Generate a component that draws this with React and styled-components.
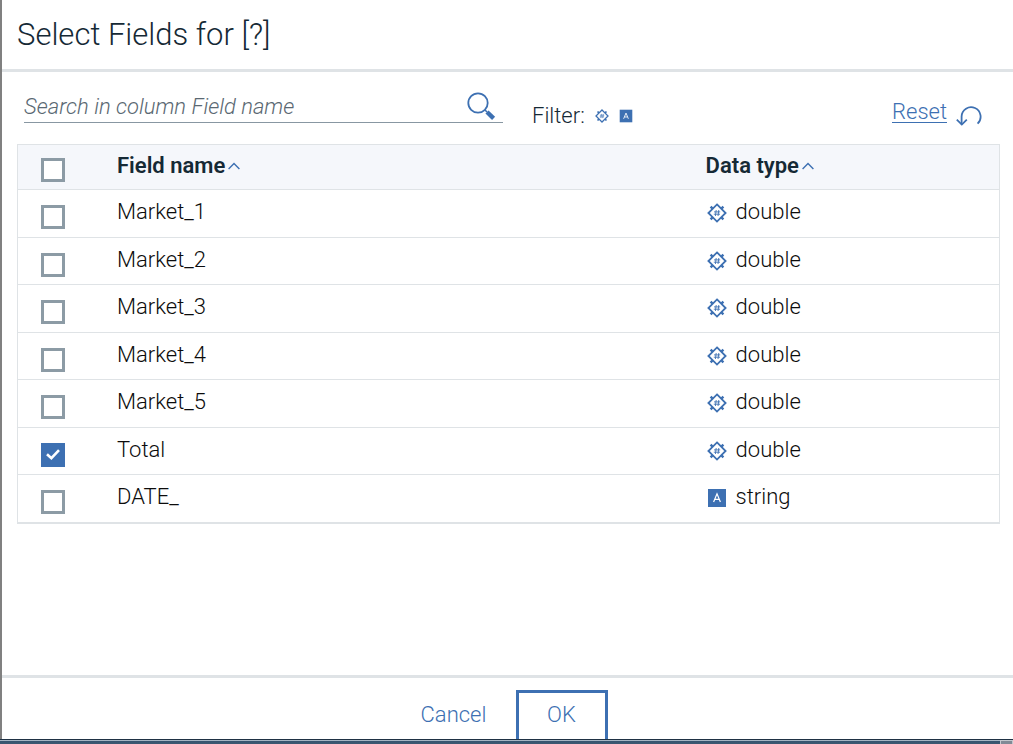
import React, { useState } from "react";
import styled, { createGlobalStyle } from "styled-components";

const blue = "#3d70b2";
const line = "#dfe3e6";

const GlobalStyle = createGlobalStyle`
  *, *::before, *::after { box-sizing: border-box; }
  body {
    margin: 0;
    background: #fff;
    color: #0c0c0c;
    font-family: Roboto, "Liberation Sans", sans-serif;
    font-weight: 300;
  }
  button, input { font: inherit; }
`;

const Page = styled.div`
  display: flex;
  flex-direction: column;
  height: 100vh;
`;

const Dialog = styled.section`
  flex: 1;
  min-height: 0;
  display: flex;
  flex-direction: column;
  border-left: 2px solid #808080;
  overflow: hidden;
`;

const Header = styled.header`
  padding: 15px 15px 14px;
  border-bottom: 3px solid ${line};
`;

const Title = styled.h1`
  margin: 0;
  font-size: 31px;
  line-height: 40px;
  font-weight: 300;
  color: #152935;
`;

const Toolbar = styled.div`
  display: flex;
  align-items: flex-start;
  height: 72px;
  padding: 17px 31px 0 22px;
`;

const SearchBox = styled.label`
  display: flex;
  align-items: center;
  width: 50%;
  height: 34px;
  padding-right: 7px;
  border-bottom: 1px solid #8897a2;
`;

const SearchInput = styled.input`
  flex: 1;
  min-width: 0;
  height: 34px;
  padding: 2px 0 0;
  border: 0;
  outline: 0;
  background: transparent;
  font-size: 22px;
  font-style: italic;
  color: #152935;
  &::placeholder { color: #5a6872; opacity: 1; }
`;

const Filter = styled.div`
  display: flex;
  align-items: center;
  gap: 10px;
  margin: 13px 0 0 29px;
  font-size: 22px;
  line-height: 28px;
  color: #152935;
`;

const IconButton = styled.button`
  display: flex;
  padding: 0;
  border: 0;
  background: none;
  cursor: pointer;
`;

const Reset = styled.a`
  display: flex;
  align-items: flex-start;
  gap: 9px;
  margin: 9px 0 0 auto;
  font-size: 22px;
  line-height: 28px;
  color: ${blue};
  text-decoration: none;
  svg { margin-top: 3px; }
`;

const ResetText = styled.span`
  height: 25px;
  border-bottom: 1px solid ${blue};
`;

const Content = styled.main`
  flex: 1;
  min-height: 0;
  overflow: hidden;
  padding: 0 13px 0 15px;
`;

const Table = styled.table`
  width: 100%;
  table-layout: fixed;
  border: 1px solid ${line};
  border-collapse: separate;
  border-spacing: 0;
  font-size: 22px;
  line-height: 28px;
`;

const HeadCell = styled.th`
  width: ${(p) => p.$width};
  height: 45px;
  padding: ${(p) => (p.$check ? "13px 0 0 23px" : "7px 0 0")};
  vertical-align: top;
  text-align: left;
  font-weight: 600;
  color: #152935;
  background: #f5f7fb;
  border-bottom: 1px solid ${line};
`;

const Row = styled.tr`
  height: 48px;
  &:nth-child(even) { height: 47px; }
`;

const Cell = styled.td`
  padding: ${(p) => (p.$check ? "15px 0 0 23px" : "8px 0 0")};
  vertical-align: top;
  border-bottom: 1px solid ${line};
`;

const Sort = styled.button`
  display: flex;
  align-items: center;
  gap: 3px;
  padding: 0;
  border: 0;
  background: none;
  color: inherit;
  cursor: pointer;
`;

const TypeLabel = styled.span`
  display: flex;
  align-items: center;
  gap: 9px;
  padding-left: 1px;
  svg { margin-top: 2px; }
`;

const TickBox = styled.span`
  position: relative;
  display: block;
  width: 24px;
  height: 24px;
`;

const Tick = styled.input`
  appearance: none;
  display: block;
  width: 24px;
  height: 24px;
  margin: 0;
  border: 3px solid #8c9ba5;
  background: #fff;
  &:checked { border-color: ${blue}; background: ${blue}; }
`;

const TickMark = styled.svg`
  position: absolute;
  inset: 0;
  pointer-events: none;
`;

const Footer = styled.footer`
  display: flex;
  justify-content: center;
  align-items: flex-start;
  height: 64px;
  overflow: hidden;
  padding: 12px 16px 0 0;
  border-top: 3px solid ${line};
`;

const Action = styled.button`
  flex: none;
  width: ${(p) => (p.$outlined ? "92px" : "124px")};
  height: 56px;
  padding: 0 0 6px;
  border: 3px solid ${(p) => (p.$outlined ? blue : "transparent")};
  background: #fff;
  color: ${blue};
  font-size: 22px;
  line-height: 28px;
  cursor: pointer;
`;

const TaskStrip = styled.div`
  display: flex;
  justify-content: flex-end;
  height: 5px;
  border-top: 1px solid #1f3144;
  background: linear-gradient(#a5b5c3 0 1px, #35536f 1px, #3c5870);
`;

const StripCorner = styled.span`
  width: 13px;
  border: solid #c3c8ce;
  border-width: 1px 1px 0;
  background: #818a96;
`;

const NumberIcon = ({ size = 20 }) => (
  <svg width={size} height={size} viewBox="0 0 20 20" fill="none" stroke={blue} aria-hidden="true">
    <path d="M10 1.4 18.6 10 10 18.6 1.4 10Z" strokeWidth="1.8" />
    <path d="M3.6 3.6 5.6 5.6M16.4 3.6 14.4 5.6M3.6 16.4 5.6 14.4M16.4 16.4 14.4 14.4" strokeWidth="2.4" />
    <path d="M9.2 7 8.4 13M11.8 7 11 13M7 8.9H13.2M6.8 11.2H13" strokeWidth="0.9" />
  </svg>
);

const TextIcon = ({ size = 20 }) => (
  <svg width={size} height={size} viewBox="0 0 20 20" aria-hidden="true">
    <path d="M1 1H19V19H1Z" fill={blue} />
    <path d="M6.6 14 10 5.8 13.4 14M7.8 11.4H12.2" fill="none" stroke="#fff" strokeWidth="1.2" />
  </svg>
);

const SearchIcon = () => (
  <svg width="30" height="30" viewBox="0 0 30 30" fill="none" stroke={blue} aria-hidden="true">
    <circle cx="12" cy="12" r="9.7" strokeWidth="1.8" />
    <path d="M19 19 21 21" strokeWidth="1.6" />
    <path d="M21 21 27.6 27.4" strokeWidth="4.4" />
  </svg>
);

const ResetIcon = () => (
  <svg width="26" height="28" viewBox="0 0 26 28" fill="none" stroke={blue} strokeWidth="1.8" aria-hidden="true">
    <path d="M21.6 22.6A9.5 9.5 0 1 0 5.6 15.5V23.5" />
    <path d="M.8 18.6 5.8 23.6 10.8 18.6" />
  </svg>
);

const Caret = () => (
  <svg width="12" height="8" viewBox="0 0 12 8" fill="none" stroke={blue} strokeWidth="1.4" aria-hidden="true">
    <path d="M.6 7 6 1.4 11.4 7" />
  </svg>
);

const fields = [
  ["Market_1", "double"],
  ["Market_2", "double"],
  ["Market_3", "double"],
  ["Market_4", "double"],
  ["Market_5", "double"],
  ["Total", "double"],
  ["DATE_", "string"],
];

function CheckBox({ label, checked, onChange }) {
  return (
    <TickBox>
      <Tick type="checkbox" aria-label={label} checked={checked} onChange={onChange} />
      {checked && (
        <TickMark width="24" height="24" viewBox="0 0 24 24" fill="none" stroke="#fff" strokeWidth="2.6">
          <path d="M6 11.2 10.4 15.2 18 7.2" />
        </TickMark>
      )}
    </TickBox>
  );
}

export default function App() {
  const [selected, setSelected] = useState(["Total"]);
  const toggle = (name) =>
    setSelected((s) => (s.includes(name) ? s.filter((n) => n !== name) : [...s, name]));
  const all = selected.length === fields.length;

  return (
    <>
      <GlobalStyle />
      <Page>
        <Dialog aria-label="Select Fields">
          <Header>
            <Title>Select Fields for [?]</Title>
          </Header>
          <Toolbar>
            <SearchBox>
              <SearchInput
                type="text"
                aria-label="Search in column Field name"
                placeholder="Search in column Field name"
              />
              <SearchIcon />
            </SearchBox>
            <Filter>
              Filter:
              <IconButton type="button" aria-label="Filter double"><NumberIcon size={14} /></IconButton>
              <IconButton type="button" aria-label="Filter string"><TextIcon size={14} /></IconButton>
            </Filter>
            <Reset href="#reset">
              <ResetText>Reset</ResetText>
              <ResetIcon />
            </Reset>
          </Toolbar>
          <Content>
            <Table>
              <thead>
                <tr>
                  <HeadCell $width="99px" $check>
                    <CheckBox
                      label="Select all"
                      checked={all}
                      onChange={() => setSelected(all ? [] : fields.map((f) => f[0]))}
                    />
                  </HeadCell>
                  <HeadCell $width="60%"><Sort type="button">Field name<Caret /></Sort></HeadCell>
                  <HeadCell><Sort type="button">Data type<Caret /></Sort></HeadCell>
                </tr>
              </thead>
              <tbody>
                {fields.map(([name, type]) => (
                  <Row key={name}>
                    <Cell $check>
                      <CheckBox label={name} checked={selected.includes(name)} onChange={() => toggle(name)} />
                    </Cell>
                    <Cell>{name}</Cell>
                    <Cell>
                      <TypeLabel>
                        {type === "double" ? <NumberIcon /> : <TextIcon />}
                        {type}
                      </TypeLabel>
                    </Cell>
                  </Row>
                ))}
              </tbody>
            </Table>
          </Content>
          <Footer>
            <Action type="button">Cancel</Action>
            <Action type="button" $outlined>OK</Action>
          </Footer>
        </Dialog>
        <TaskStrip><StripCorner /></TaskStrip>
      </Page>
    </>
  );
}
